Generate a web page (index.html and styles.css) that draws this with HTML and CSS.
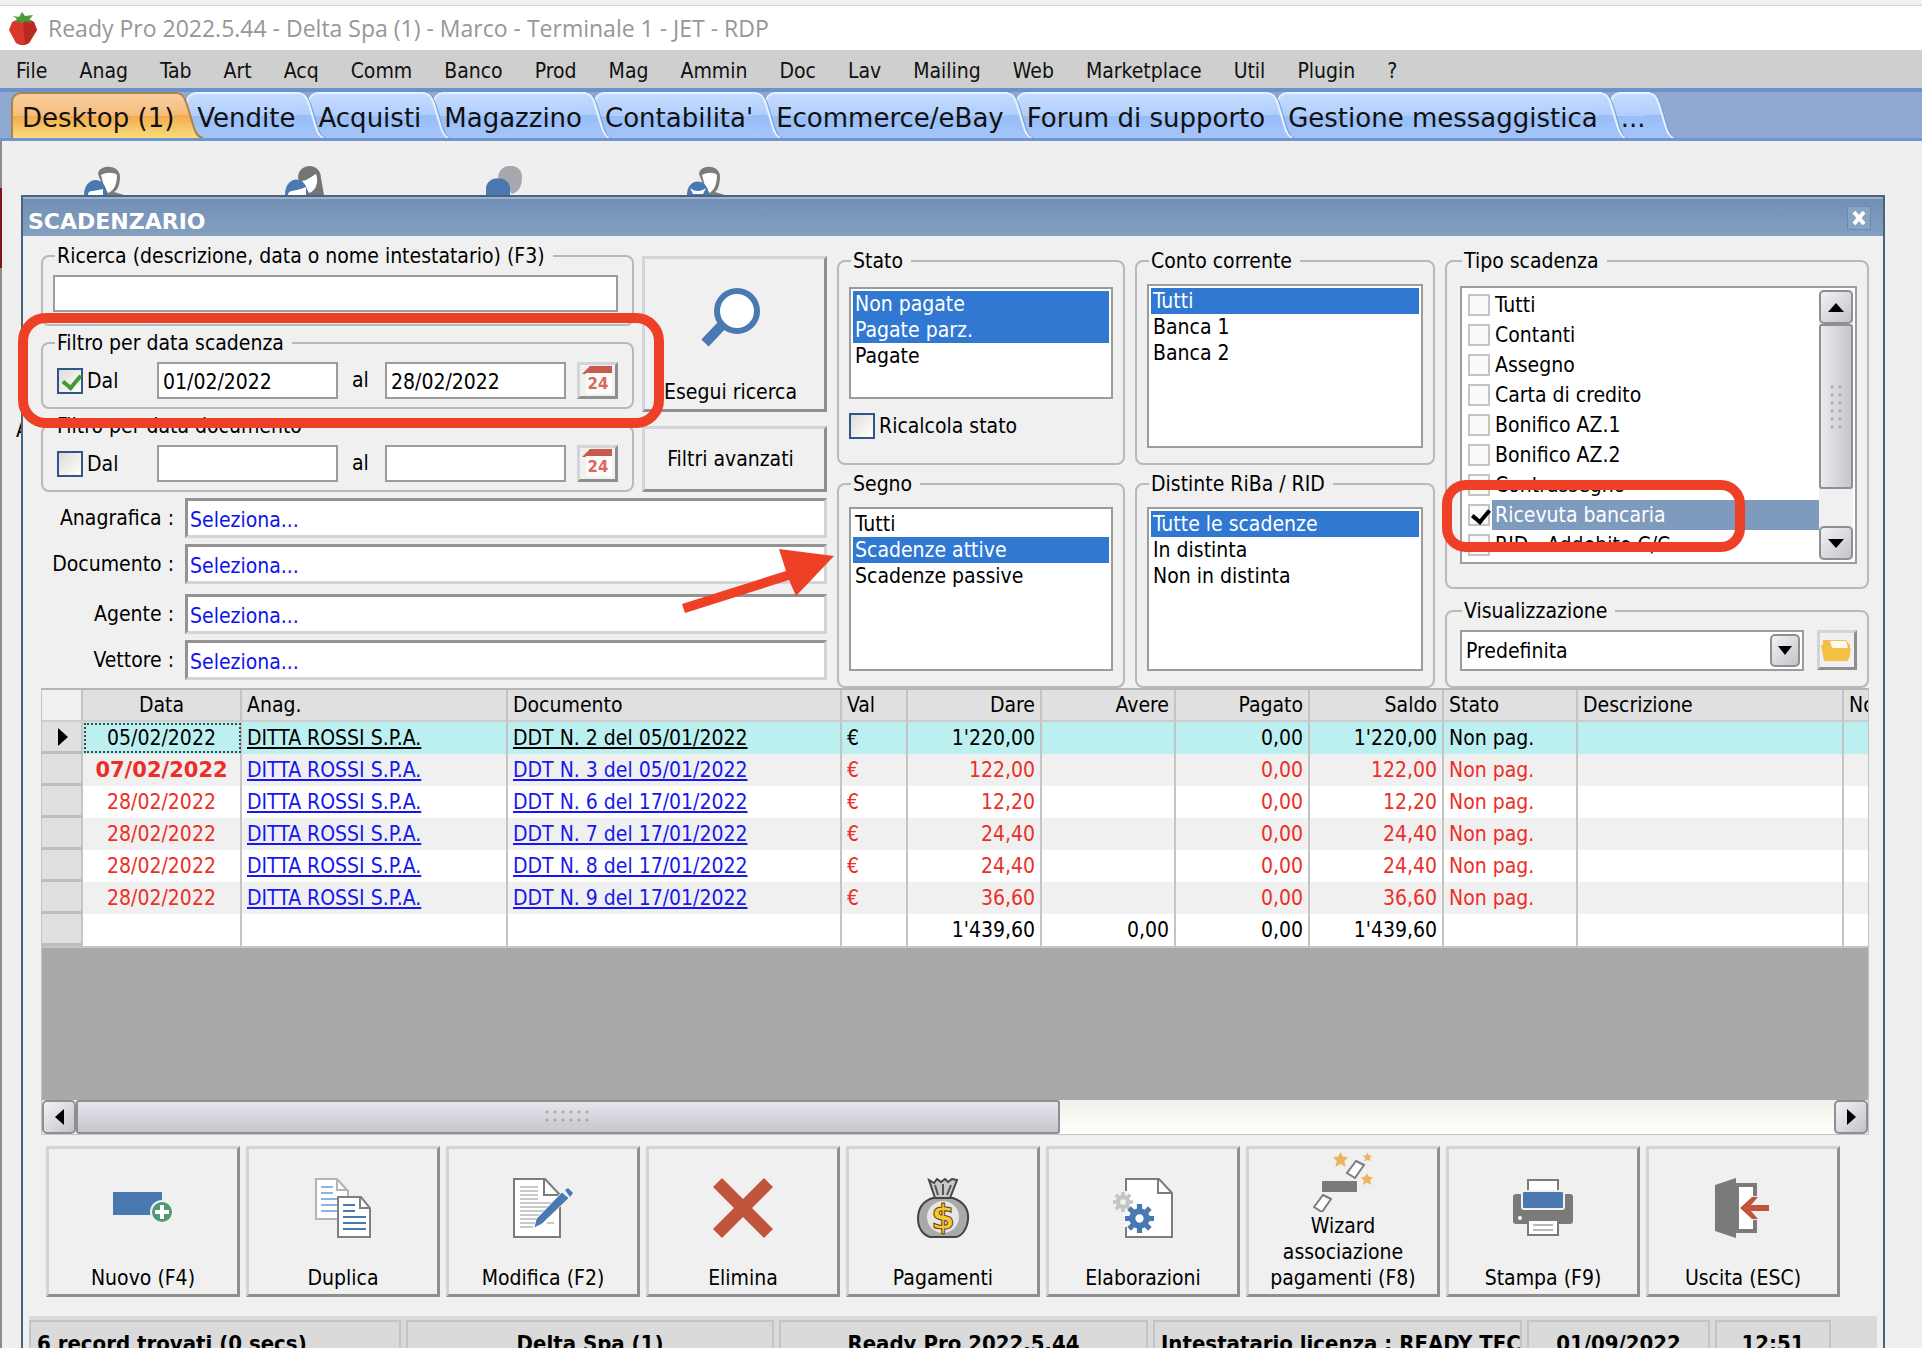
FILE: index.html
```html
<!DOCTYPE html>
<html lang="it">
<head>
  <meta charset="UTF-8">
  <meta name="viewport" content="width=device-width, initial-scale=1.0">
  <title>Ready Pro - Scadenzario</title>
  <link rel="stylesheet" href="styles.css">
</head>
<body>
  <header class="titlebar">
    <svg class="app-icon" width="30" height="34" viewBox="0 0 30 34">
      <path d="M4 11 L11 8 L15 10 L20 8 L26 11 L29 19 L21 32 L17 34 L12 34 L8 32 L1 19 Z" fill="#d8372a"/>
      <path d="M15 10 L20 8 L26 11 L29 19 L21 32 L17 34 Z" fill="#b92a20"/>
      <path d="M5 5 L11 6 L14 1 L17 5 L25 4 L21 9 L24 12 L17 10 L14 13 L11 10 L6 11 L9 8 Z" fill="#4c9a3a"/>
    </svg>
    <span>Ready Pro 2022.5.44 - Delta Spa (1) - Marco - Terminale 1 - JET - RDP</span>
  </header>

  <nav class="menubar">
    <a href="#">File</a>
    <a href="#">Anag</a>
    <a href="#">Tab</a>
    <a href="#">Art</a>
    <a href="#">Acq</a>
    <a href="#">Comm</a>
    <a href="#">Banco</a>
    <a href="#">Prod</a>
    <a href="#">Mag</a>
    <a href="#">Ammin</a>
    <a href="#">Doc</a>
    <a href="#">Lav</a>
    <a href="#">Mailing</a>
    <a href="#">Web</a>
    <a href="#">Marketplace</a>
    <a href="#">Util</a>
    <a href="#">Plugin</a>
    <a href="#">?</a>
  </nav>

  <!-- shared gradients and shapes -->
  <svg class="defs" width="0" height="0">
    <defs>
      <linearGradient id="tab-blue" x1="0" y1="0" x2="0" y2="1">
        <stop offset="0" stop-color="#c6dcff"/>
        <stop offset="0.49" stop-color="#b0cefc"/>
        <stop offset="0.5" stop-color="#98bdf6"/>
        <stop offset="1" stop-color="#a3c5fa"/>
      </linearGradient>
      <linearGradient id="tab-orange" x1="0" y1="0" x2="0" y2="1">
        <stop offset="0" stop-color="#f9cf9f"/>
        <stop offset="0.49" stop-color="#f5bd7c"/>
        <stop offset="0.5" stop-color="#f3a94e"/>
        <stop offset="1" stop-color="#fadd7c"/>
      </linearGradient>
      <symbol id="slant" viewBox="0 0 30 46">
        <path d="M0 0 H2 C10 0 12 6 15 16 L21 36 C23 42 25 46 30 46 H0 Z" fill="url(#tab-blue)"/>
        <path d="M0 1 H2 C9 1 11 6 14 16 L20 36 C22 42 24 45 28 46" fill="none" stroke="#e6f0ff" stroke-width="2"/>
        <path d="M4 0 C11 1 13 7 16 16 L22 36 C24 42 26 45 30 46" fill="none" stroke="#7b9dd0" stroke-width="1"/>
      </symbol>
      <symbol id="slant-active" viewBox="0 0 30 46">
        <path d="M0 0 H2 C10 0 12 6 15 16 L21 36 C23 42 25 46 30 46 H0 Z" fill="url(#tab-orange)"/>
        <path d="M0 1 H2 C9 1 11 6 14 16 L20 36 C22 42 24 45 29 46" fill="none" stroke="#a8844f" stroke-width="2"/>
      </symbol>
      <symbol id="calendar" viewBox="0 0 34 32">
        <path d="M2 9 L10 1 H32 V8 Z" fill="#c85a4c"/>
        <path d="M6 8 H32 V29 H6 Z" fill="#fbfbfb"/>
        <text x="18" y="24" text-anchor="middle" class="cal-day">24</text>
      </symbol>
      <symbol id="gear" viewBox="-14 -14 28 28">
        <circle r="7" fill="none" stroke="currentColor" stroke-width="6"/>
        <path d="M0 -14V-8M0 14V8M-14 0H-8M14 0H8M-10 -10L-6 -6M10 10L6 6M-10 10L-6 6M10 -10L6 -6" stroke="currentColor" stroke-width="5"/>
      </symbol>
      <symbol id="star" viewBox="0 0 20 20">
        <path d="M10 0 L13 6 L20 7 L15 12 L17 20 L10 16 L3 20 L5 12 L0 7 L7 6 Z" fill="#edb45e"/>
      </symbol>
    </defs>
  </svg>

  <nav class="tabs">
    <a href="#" class="tab active"><span>Desktop (1)</span><svg width="30" height="46"><use href="#slant-active"/></svg></a>
    <a href="#" class="tab"><span>Vendite</span><svg width="30" height="46"><use href="#slant"/></svg></a>
    <a href="#" class="tab"><span>Acquisti</span><svg width="30" height="46"><use href="#slant"/></svg></a>
    <a href="#" class="tab"><span>Magazzino</span><svg width="30" height="46"><use href="#slant"/></svg></a>
    <a href="#" class="tab"><span>Contabilita'</span><svg width="30" height="46"><use href="#slant"/></svg></a>
    <a href="#" class="tab"><span>Ecommerce/eBay</span><svg width="30" height="46"><use href="#slant"/></svg></a>
    <a href="#" class="tab"><span>Forum di supporto</span><svg width="30" height="46"><use href="#slant"/></svg></a>
    <a href="#" class="tab"><span>Gestione messaggistica</span><svg width="30" height="46"><use href="#slant"/></svg></a>
    <a href="#" class="tab"><span>...</span><svg width="30" height="46"><use href="#slant"/></svg></a>
  </nav>

  <main class="desktop">
    <div class="desktop-edge"></div>
    <div class="desktop-icons">
      <svg width="40" height="29" viewBox="0 0 40 29">
        <path d="M14 8 C15 -2 35 -2 36 10 C36 18 34 24 30 26 L40 29 H22 Z" fill="#7c7c7c"/>
        <path d="M17 9 C22 6 30 6 33 9 C33 18 30 25 24 27 L20 20 Z" fill="#fff"/>
        <path d="M0 29 C0 10 22 8 23 29 Z" fill="#4a78b0"/>
        <path d="M4 29 C4 23 10 26 19 23 V29 Z" fill="#fff"/>
      </svg>
      <svg width="40" height="29" viewBox="0 0 40 29">
        <path d="M13 12 C13 -4 36 -4 36 12 L39 29 H20 Z" fill="#757575"/>
        <path d="M17 15 C24 14 28 9 31 8 C34 16 31 25 24 27 Z" fill="#fff"/>
        <path d="M0 29 C0 9 22 8 23 29 Z" fill="#4a78b0"/>
        <path d="M3 29 C3 23 10 26 21 21 V29 Z" fill="#fff"/>
      </svg>
      <svg width="40" height="29" viewBox="0 0 40 29">
        <path d="M12 11 C13 -4 36 -4 36 11 C36 20 33 26 26 28 Z" fill="#a5a8ac"/>
        <path d="M0 29 V22 C1 9 23 9 24 22 V29 Z" fill="#4a78b0"/>
      </svg>
      <svg width="40" height="29" viewBox="0 0 40 29">
        <path d="M12 8 C13 -2 32 -2 33 10 C33 18 31 24 28 26 L38 29 H20 Z" fill="#7c7c7c"/>
        <path d="M15 9 C20 6 27 6 30 9 C30 18 27 25 22 27 L18 20 Z" fill="#fff"/>
        <path d="M0 29 C0 11 21 11 22 29 Z" fill="#4a78b0"/>
        <path d="M3 22 C8 26 14 26 19 22 L16 28 H6 Z" fill="#fff"/>
      </svg>
    </div>
    <span class="desktop-label">A</span>

    <section class="dialog">
      <div class="dialog-title">
        <h1>SCADENZARIO</h1>
        <button type="button" class="close" aria-label="Chiudi">
          <svg width="14" height="14" viewBox="0 0 14 14"><path d="M2 1 L12 13 M12 1 L2 13" stroke="#fff" stroke-width="4"/></svg>
        </button>
      </div>

      <form class="dialog-body">
        <div class="filters">
          <div class="search-panel">
            <div class="search-top">
              <div class="search-groups">
                <fieldset class="search-group">
                  <legend><label for="ricerca">Ricerca (descrizione, data o nome intestatario) (F3)</label></legend>
                  <input type="text" id="ricerca" class="field">
                </fieldset>
                <fieldset class="marked">
                  <legend>Filtro per data scadenza</legend>
                  <label class="date-check"><input type="checkbox" class="check" checked>Dal</label>
                  <input type="text" class="field date" value="01/02/2022" aria-label="Scadenza dal">
                  <label for="scad-al" class="date-to">al</label>
                  <input type="text" class="field date" id="scad-al" value="28/02/2022">
                  <button type="button" class="btn cal" aria-label="Calendario scadenza"><svg width="34" height="32"><use href="#calendar"/></svg></button>
                  <div class="mark mark-date"></div>
                </fieldset>
                <fieldset>
                  <legend>Filtro per data documento</legend>
                  <label class="date-check"><input type="checkbox" class="check">Dal</label>
                  <input type="text" class="field date" aria-label="Documento dal">
                  <label for="doc-al" class="date-to">al</label>
                  <input type="text" class="field date" id="doc-al">
                  <button type="button" class="btn cal" aria-label="Calendario documento"><svg width="34" height="32"><use href="#calendar"/></svg></button>
                </fieldset>
              </div>
              <div class="search-buttons">
                <button type="button" class="btn run-search">
                  <svg width="60" height="60" viewBox="0 0 60 60">
                    <path d="M4 56 L23 36" stroke="#4a78b0" stroke-width="10"/>
                    <circle cx="36" cy="24" r="20" fill="#fff" stroke="#4a78b0" stroke-width="6"/>
                  </svg>
                  <span>Esegui ricerca</span>
                </button>
                <button type="button" class="btn advanced">Filtri avanzati</button>
              </div>
            </div>
            <div class="lookups">
              <label for="anagrafica">Anagrafica :</label>
              <input type="text" id="anagrafica" class="lookup" value="Seleziona...">
              <label for="documento">Documento :</label>
              <input type="text" id="documento" class="lookup" value="Seleziona...">
            </div>
            <div class="lookups">
              <label for="agente">Agente :</label>
              <input type="text" id="agente" class="lookup" value="Seleziona...">
              <label for="vettore">Vettore :</label>
              <input type="text" id="vettore" class="lookup" value="Seleziona...">
            </div>
            <svg class="arrow" width="154" height="70" viewBox="0 0 154 70">
              <path d="M0 56 L104 23 L97 1 L152 8 L114 48 L107 32 L3 65 Z" fill="#ed4026"/>
            </svg>
          </div>

          <div class="filter-column">
            <fieldset class="list-group state-group">
              <legend><label for="stato">Stato</label></legend>
              <select id="stato" class="listbox" multiple size="4">
                <option selected>Non pagate</option>
                <option selected>Pagate parz.</option>
                <option>Pagate</option>
              </select>
              <label class="recalc"><input type="checkbox" class="check">Ricalcola stato</label>
            </fieldset>
            <fieldset class="list-group">
              <legend><label for="segno">Segno</label></legend>
              <select id="segno" class="listbox" size="6">
                <option>Tutti</option>
                <option selected>Scadenze attive</option>
                <option>Scadenze passive</option>
              </select>
            </fieldset>
          </div>

          <div class="filter-column">
            <fieldset class="list-group">
              <legend><label for="conto">Conto corrente</label></legend>
              <select id="conto" class="listbox" size="6">
                <option selected>Tutti</option>
                <option>Banca 1</option>
                <option>Banca 2</option>
              </select>
            </fieldset>
            <fieldset class="list-group">
              <legend><label for="distinte">Distinte RiBa / RID</label></legend>
              <select id="distinte" class="listbox" size="6">
                <option selected>Tutte le scadenze</option>
                <option>In distinta</option>
                <option>Non in distinta</option>
              </select>
            </fieldset>
          </div>

          <div class="filter-column">
            <fieldset class="type-group">
              <legend>Tipo scadenza</legend>
              <div class="checklist">
                <div class="checklist-items">
                  <label><input type="checkbox"><span>Tutti</span></label>
                  <label><input type="checkbox"><span>Contanti</span></label>
                  <label><input type="checkbox"><span>Assegno</span></label>
                  <label><input type="checkbox"><span>Carta di credito</span></label>
                  <label><input type="checkbox"><span>Bonifico AZ.1</span></label>
                  <label><input type="checkbox"><span>Bonifico AZ.2</span></label>
                  <label><input type="checkbox"><span>Contrassegno</span></label>
                  <label class="selected"><input type="checkbox" checked><span>Ricevuta bancaria</span></label>
                  <label><input type="checkbox"><span>RID - Addebito C/C</span></label>
                </div>
                <div class="vscroll">
                  <button type="button" class="scroll-btn" aria-label="Su"><svg width="16" height="9" viewBox="0 0 16 9"><path d="M8 0 L16 9 H0 Z"/></svg></button>
                  <div class="thumb"><div class="grip"></div></div>
                  <button type="button" class="scroll-btn" aria-label="Giù"><svg width="16" height="9" viewBox="0 0 16 9"><path d="M8 9 L16 0 H0 Z"/></svg></button>
                </div>
              </div>
              <div class="mark mark-type"></div>
            </fieldset>
            <fieldset class="view-group">
              <legend><label for="vista">Visualizzazione</label></legend>
              <div class="combo">
                <select id="vista">
                  <option>Predefinita</option>
                </select>
                <span class="combo-arrow"><svg width="14" height="9" viewBox="0 0 14 9"><path d="M7 9 L14 0 H0 Z"/></svg></span>
              </div>
              <button type="button" class="btn folder" aria-label="Apri">
                <svg width="32" height="26" viewBox="0 0 32 26">
                  <path d="M3 3 H26 L30 8 V20 H3 Z" fill="#f0bd55"/>
                  <path d="M10 4 H26 L28 11 H12 Z" fill="#fffaf0"/>
                  <path d="M1 8 H10 L14 12 H31 L28 24 H4 Z" fill="#f5c143"/>
                </svg>
              </button>
            </fieldset>
          </div>
        </div>

        <div class="grid">
          <div class="grid-view">
            <table>
              <colgroup>
                <col class="c-sel"><col class="c-date"><col class="c-anag"><col class="c-doc"><col class="c-val">
                <col class="c-num"><col class="c-num"><col class="c-num"><col class="c-num"><col class="c-num">
                <col class="c-desc"><col class="c-note">
              </colgroup>
              <thead>
                <tr>
                  <th></th>
                  <th class="center">Data</th>
                  <th>Anag.</th>
                  <th>Documento</th>
                  <th>Val</th>
                  <th class="num">Dare</th>
                  <th class="num">Avere</th>
                  <th class="num">Pagato</th>
                  <th class="num">Saldo</th>
                  <th>Stato</th>
                  <th>Descrizione</th>
                  <th>Note</th>
                </tr>
              </thead>
              <tbody>
                <tr class="current">
                  <td><svg width="10" height="18" viewBox="0 0 10 18"><path d="M0 0 L10 9 L0 18 Z"/></svg></td>
                  <td class="center focus">05/02/2022</td>
                  <td><a href="#">DITTA ROSSI S.P.A.</a></td>
                  <td><a href="#">DDT N. 2 del 05/01/2022</a></td>
                  <td>€</td>
                  <td class="num">1'220,00</td>
                  <td></td>
                  <td class="num">0,00</td>
                  <td class="num">1'220,00</td>
                  <td>Non pag.</td>
                  <td></td>
                  <td></td>
                </tr>
                <tr>
                  <td></td>
                  <td class="center late">07/02/2022</td>
                  <td><a href="#">DITTA ROSSI S.P.A.</a></td>
                  <td><a href="#">DDT N. 3 del 05/01/2022</a></td>
                  <td>€</td>
                  <td class="num">122,00</td>
                  <td></td>
                  <td class="num">0,00</td>
                  <td class="num">122,00</td>
                  <td>Non pag.</td>
                  <td></td>
                  <td></td>
                </tr>
                <tr>
                  <td></td>
                  <td class="center">28/02/2022</td>
                  <td><a href="#">DITTA ROSSI S.P.A.</a></td>
                  <td><a href="#">DDT N. 6 del 17/01/2022</a></td>
                  <td>€</td>
                  <td class="num">12,20</td>
                  <td></td>
                  <td class="num">0,00</td>
                  <td class="num">12,20</td>
                  <td>Non pag.</td>
                  <td></td>
                  <td></td>
                </tr>
                <tr>
                  <td></td>
                  <td class="center">28/02/2022</td>
                  <td><a href="#">DITTA ROSSI S.P.A.</a></td>
                  <td><a href="#">DDT N. 7 del 17/01/2022</a></td>
                  <td>€</td>
                  <td class="num">24,40</td>
                  <td></td>
                  <td class="num">0,00</td>
                  <td class="num">24,40</td>
                  <td>Non pag.</td>
                  <td></td>
                  <td></td>
                </tr>
                <tr>
                  <td></td>
                  <td class="center">28/02/2022</td>
                  <td><a href="#">DITTA ROSSI S.P.A.</a></td>
                  <td><a href="#">DDT N. 8 del 17/01/2022</a></td>
                  <td>€</td>
                  <td class="num">24,40</td>
                  <td></td>
                  <td class="num">0,00</td>
                  <td class="num">24,40</td>
                  <td>Non pag.</td>
                  <td></td>
                  <td></td>
                </tr>
                <tr>
                  <td></td>
                  <td class="center">28/02/2022</td>
                  <td><a href="#">DITTA ROSSI S.P.A.</a></td>
                  <td><a href="#">DDT N. 9 del 17/01/2022</a></td>
                  <td>€</td>
                  <td class="num">36,60</td>
                  <td></td>
                  <td class="num">0,00</td>
                  <td class="num">36,60</td>
                  <td>Non pag.</td>
                  <td></td>
                  <td></td>
                </tr>
                <tr class="total">
                  <td></td>
                  <td></td>
                  <td></td>
                  <td></td>
                  <td></td>
                  <td class="num">1'439,60</td>
                  <td class="num">0,00</td>
                  <td class="num">0,00</td>
                  <td class="num">1'439,60</td>
                  <td></td>
                  <td></td>
                  <td></td>
                </tr>
              </tbody>
            </table>
          </div>
          <div class="hscroll">
            <button type="button" class="scroll-btn" aria-label="Sinistra"><svg width="9" height="16" viewBox="0 0 9 16"><path d="M9 0 V16 L0 8 Z"/></svg></button>
            <div class="track"><div class="thumb"><div class="grip"></div></div></div>
            <button type="button" class="scroll-btn" aria-label="Destra"><svg width="9" height="16" viewBox="0 0 9 16"><path d="M0 0 V16 L9 8 Z"/></svg></button>
          </div>
        </div>

        <div class="actions">
          <button type="button" class="btn">
            <svg width="60" height="60" viewBox="0 0 60 60">
              <rect x="0" y="14" width="49" height="23" fill="#4a78b0"/>
              <circle cx="49" cy="34" r="12" fill="#f0f0f0"/>
              <circle cx="49" cy="34" r="10" fill="#4f9a70"/>
              <path d="M49 27 V41 M42 34 H56" stroke="#fff" stroke-width="4"/>
            </svg>
            <span>Nuovo (F4)</span>
          </button>
          <button type="button" class="btn">
            <svg width="60" height="60" viewBox="0 0 60 60">
              <path d="M3 1 H24 L35 13 V41 H3 Z" fill="#fff" stroke="#b4b4b4" stroke-width="2"/>
              <path d="M24 1 V12 H35" fill="none" stroke="#b4b4b4" stroke-width="2"/>
              <path d="M8 9 H20 M8 15 H20 M8 21 H24 M8 27 H24 M8 33 H24" stroke="#8db3e0" stroke-width="2"/>
              <path d="M25 19 H48 L57 30 V59 H25 Z" fill="#fff" stroke="#808080" stroke-width="2"/>
              <path d="M47 19 V30 H57" fill="none" stroke="#808080" stroke-width="2"/>
              <path d="M30 27 H42 M30 33 H42 M30 39 H53 M30 45 H53 M30 51 H53" stroke="#4a78b0" stroke-width="2"/>
            </svg>
            <span>Duplica</span>
          </button>
          <button type="button" class="btn">
            <svg width="60" height="60" viewBox="0 0 60 60">
              <path d="M1 1 H32 L47 17 V59 H1 Z" fill="#fff" stroke="#7c7c7c" stroke-width="2"/>
              <path d="M31 1 V17 H47" fill="none" stroke="#7c7c7c" stroke-width="2"/>
              <path d="M7 9 H25 M7 13 H25 M7 17 H25 M7 21 H25 M7 25 H41 M7 29 H38 M7 33 H34 M7 37 H30 M7 41 H27 M7 45 H24 M7 49 H20 M34 45 H41" stroke="#b8b8b8" stroke-width="1.5"/>
              <path d="M21 50 L23 41 L49 14 L56 20 L29 46 Z" fill="#4a78b0" stroke="#f4f4f4"/>
              <path d="M52 12 L55 10 L60 15 L57 19 Z" fill="#4a78b0"/>
            </svg>
            <span>Modifica (F2)</span>
          </button>
          <button type="button" class="btn">
            <svg width="60" height="60" viewBox="0 0 60 60">
              <path d="M9 0 L30 21 L51 0 L60 9 L39 30 L60 51 L51 60 L30 39 L9 60 L0 51 L21 30 L0 9 Z" fill="#c1543a"/>
            </svg>
            <span>Elimina</span>
          </button>
          <button type="button" class="btn">
            <svg width="60" height="60" viewBox="0 0 60 60">
              <path d="M22 20 L16 2 L21 5 L24 1 L28 4 L32 1 L35 4 L39 1 L44 2 L37 20 Z" fill="#c9c9c9" stroke="#444" stroke-width="2"/>
              <path d="M25 17 L22 7 M30 17 V6 M34 17 L38 7" stroke="#555" stroke-width="2"/>
              <path d="M20 20 H40 C51 24 56 32 55 42 C54 51 49 58 43 59 H17 C10 57 5 50 5 41 C5 31 10 23 20 20 Z" fill="#a9a9a9" stroke="#444" stroke-width="2"/>
              <circle cx="30" cy="39" r="16" fill="#e6e6e6"/>
              <text x="30" y="51" text-anchor="middle" class="bag-sign">$</text>
            </svg>
            <span>Pagamenti</span>
          </button>
          <button type="button" class="btn">
            <svg width="60" height="60" viewBox="0 0 60 60">
              <path d="M13 1 H46 L59 15 V59 H13 Z" fill="#fff" stroke="#7c7c7c" stroke-width="2"/>
              <path d="M45 1 V15 H59" fill="none" stroke="#7c7c7c" stroke-width="2"/>
              <rect x="10" y="13" width="6" height="36" fill="#f4f4f4"/>
              <use href="#gear" x="0" y="14" width="20" height="20" color="#c4c4c4"/>
              <use href="#gear" x="12" y="26" width="29" height="29" color="#4a78b0"/>
            </svg>
            <span>Elaborazioni</span>
          </button>
          <button type="button" class="btn">
            <svg width="60" height="60" viewBox="0 0 60 60">
              <use href="#star" x="20" y="0" width="15" height="15"/>
              <use href="#star" x="50" y="0" width="9" height="10"/>
              <use href="#star" x="48" y="21" width="12" height="12"/>
              <path d="M43 9 L51 13 L42 26 L34 21 Z" fill="#fff" stroke="#7c7c7c" stroke-width="2"/>
              <rect x="9" y="29" width="35" height="11" rx="1" fill="#7a7a7a"/>
              <path d="M10 43 L18 47 L9 60 L1 55 Z" fill="#fff" stroke="#7c7c7c" stroke-width="2"/>
            </svg>
            <span>Wizard associazione pagamenti (F8)</span>
          </button>
          <button type="button" class="btn">
            <svg width="60" height="60" viewBox="0 0 60 60">
              <rect x="0" y="16" width="60" height="30" rx="3" fill="#7a7a7a"/>
              <rect x="15" y="2" width="30" height="18" fill="#fff" stroke="#7a7a7a" stroke-width="2"/>
              <rect x="9" y="13" width="42" height="18" rx="2" fill="#4a78b0" stroke="#f0f0f0" stroke-width="2"/>
              <circle cx="7" cy="40" r="2" fill="#fff"/>
              <rect x="15" y="42" width="30" height="15" fill="#fff" stroke="#7a7a7a" stroke-width="2"/>
              <path d="M20 47 H40 M20 52 H40" stroke="#b8b8b8" stroke-width="2"/>
            </svg>
            <span>Stampa (F9)</span>
          </button>
          <button type="button" class="btn">
            <svg width="60" height="60" viewBox="0 0 60 60">
              <path d="M24 7 H42 V53 H24 Z" fill="#fff" stroke="#7a7a7a" stroke-width="4"/>
              <rect x="39" y="18" width="8" height="24" fill="#f0f0f0"/>
              <path d="M2 7 L23 0 V60 L2 53 Z" fill="#7a7a7a"/>
              <path d="M27 30 L39 19 H45 L38 27 H56 V33 H38 L45 41 H39 Z" fill="#c1543a"/>
            </svg>
            <span>Uscita (ESC)</span>
          </button>
        </div>
      </form>

      <footer class="statusbar">
        <div class="status-left">6 record trovati (0 secs)</div>
        <div>Delta Spa (1)</div>
        <div>Ready Pro 2022.5.44</div>
        <div class="status-left">Intestatario licenza : READY TEC</div>
        <div>01/09/2022</div>
        <div>12:51</div>
      </footer>
    </section>
  </main>
</body>
</html>
```
FILE: styles.css
```css
* {
  box-sizing: border-box;
}

body {
  margin: 0;
  height: 100vh;
  display: flex;
  flex-direction: column;
  overflow: hidden;
  border-top: 5px solid #f0f0f0;
  background: #efefef;
  color: #000;
  font-family: 'DejaVu Sans Condensed', 'DejaVu Sans', sans-serif;
  font-size: 21px;
  line-height: 26px;
}

button,
input,
select {
  font: inherit;
  color: inherit;
}

.defs {
  position: absolute;
}

.titlebar {
  display: flex;
  align-items: center;
  gap: 10px;
  height: 45px;
  padding-left: 8px;
  flex-shrink: 0;
  background: #fff;
  border-top: 1px solid #d4d4d4;
  color: #979797;
  font-family: 'Open Sans', 'Noto Sans', sans-serif;
  font-size: 23px;
}

.menubar {
  display: flex;
  align-items: center;
  gap: 32px;
  height: 38px;
  padding: 4px 0 0 16px;
  flex-shrink: 0;
  background: #cfcfcf;
}

.menubar a {
  color: #111;
  text-decoration: none;
}

.tabs {
  display: flex;
  align-items: flex-end;
  height: 53px;
  padding-left: 11px;
  flex-shrink: 0;
  background: #8fa9d3;
  border-top: 4px solid #6d91cb;
  border-bottom: 3px solid #7195cd;
  font-family: 'DejaVu Sans', sans-serif;
  font-size: 26px;
}

.tab {
  display: flex;
  height: 46px;
  margin-right: -18px;
  color: #111;
  text-decoration: none;
}

.tab span {
  padding: 11px 0 0 9px;
  border-top: 2px solid #e6f0ff;
  border-left: 2px solid #e6f0ff;
  border-top-left-radius: 10px;
  background: linear-gradient(#c6dcff, #b0cefc 49%, #98bdf6 50%, #a3c5fa);
}

.tab svg {
  position: relative;
  z-index: 1;
}

.tab.active span {
  border-color: #a8844f;
  background: linear-gradient(#f9cf9f, #f5bd7c 49%, #f3a94e 50%, #fadd7c);
}

/* desktop behind the dialog */
.desktop {
  position: relative;
  flex: 1;
  border-left: 2px solid #8c8c8c;
}

.desktop-edge {
  position: absolute;
  left: -2px;
  top: 47px;
  width: 2px;
  height: 80px;
  background: #7c1712;
}

.desktop-icons {
  display: flex;
  gap: 161px;
  height: 54px;
  padding: 25px 0 0 82px;
}

.desktop-label {
  position: absolute;
  left: 14px;
  top: 276px;
}

.dialog {
  position: relative;
  margin: 0 37px 0 19px;
  border: 2px solid #4a637f;
  border-bottom: 0;
  background: #f0f0f0;
}

.dialog-title {
  display: flex;
  align-items: center;
  justify-content: space-between;
  height: 39px;
  padding: 8px 12px 0 5px;
  border-top: 2px solid #9db2cc;
  background: linear-gradient(#7290b6, #84a0c0);
}

.dialog-title h1 {
  margin: 0;
  color: #fff;
  font-family: 'DejaVu Sans', sans-serif;
  font-size: 22px;
}

.close {
  display: flex;
  padding: 4px;
  margin-bottom: 8px;
  border: 1px solid #6d89ad;
  background: #89a3c2;
}

.dialog-body {
  padding: 7px 14px 0 18px;
}

.filters {
  display: grid;
  grid-template-columns: 786fr 288fr 300fr 424fr;
  gap: 10px;
}

fieldset {
  position: relative;
  display: flex;
  min-width: 0;
  margin: 0;
  padding: 6px 14px 8px 10px;
  border: 2px solid #b9b9b9;
  border-radius: 8px;
}

legend {
  margin-left: 2px;
  padding: 0 8px 0 2px;
}

.field {
  width: 100%;
  height: 37px;
  padding: 2px 4px 0;
  border: 2px solid #9c9c9c;
  background: #fff;
}

.btn {
  padding: 0;
  border: 3px solid;
  border-color: #d3d3da #8f8f8f #8f8f8f #d3d3da;
  background: #f0f0f0;
}

.check {
  appearance: none;
  width: 26px;
  height: 26px;
  margin: 0 4px 0 0;
  border: 2px solid #2f5687;
  background: linear-gradient(135deg, #dcdcd7, #fff);
}

.check:checked {
  position: relative;
}

.check:checked::after {
  content: '';
  position: absolute;
  left: 7px;
  top: 1px;
  width: 8px;
  height: 14px;
  border: solid #3f9a2f;
  border-width: 0 4px 4px 0;
  transform: rotate(40deg);
}

/* search panel */
.search-panel {
  position: relative;
  display: flex;
  flex-direction: column;
  gap: 10px;
}

.search-top {
  display: grid;
  grid-template-columns: 593fr 185fr;
  gap: 8px;
  margin-bottom: -4px;
}

.search-groups {
  display: flex;
  flex-direction: column;
  gap: 4px;
}

.search-group {
  padding-bottom: 12px;
}

.marked {
  z-index: 1;
}

.date-check {
  display: flex;
  align-items: center;
  width: 104px;
  padding-left: 4px;
  flex-shrink: 0;
}

.date {
  flex: 1;
  min-width: 0;
}

.date-to {
  width: 47px;
  padding: 5px 0 0 14px;
}

.cal {
  width: 41px;
  height: 37px;
  margin-left: 11px;
}

.cal svg {
  display: block;
}

.cal-day {
  fill: #d8695c;
  font: bold 15px 'DejaVu Sans', sans-serif;
}

.search-buttons {
  display: flex;
  flex-direction: column;
  gap: 14px;
  padding-top: 13px;
}

.run-search {
  display: flex;
  flex-direction: column;
  align-items: center;
  height: 156px;
  padding: 28px 8px 4px 0;
  justify-content: space-between;
}

.advanced {
  height: 66px;
  padding-right: 8px;
}

.lookups {
  display: grid;
  grid-template-columns: 133px 1fr;
  align-items: center;
  gap: 6px 11px;
  text-align: right;
}

.lookup {
  width: 100%;
  height: 40px;
  padding: 3px 2px 0;
  border: 3px solid;
  border-color: #939393 #d3d3da #d3d3da #939393;
  background: #fff;
  color: #1212ee;
}

/* red annotations */
.mark {
  position: absolute;
  border: 10px solid #ed4026;
  border-radius: 28px;
  pointer-events: none;
}

.mark-date {
  inset: -43px -32px -21px -25px;
}

.mark-type {
  left: -5px;
  right: 122px;
  top: 206px;
  height: 72px;
  border-radius: 24px;
}

.arrow {
  position: absolute;
  right: -9px;
  bottom: 70px;
}

/* list filters */
.filter-column {
  display: flex;
  flex-direction: column;
  gap: 6px;
  padding-top: 5px;
}

.list-group {
  flex-direction: column;
  gap: 14px;
  height: 217px;
  padding: 10px 10px 17px;
}

.state-group {
  padding: 13px 10px 22px;
}

.listbox {
  appearance: none;
  flex: 1;
  width: 100%;
  min-height: 0;
  padding: 2px;
  border: 2px solid #9c9c9c;
  border-radius: 0;
  outline: 0;
  overflow: hidden;
  background: #fff;
}

.listbox option {
  height: 26px;
  padding: 1px 2px 0;
}

.listbox option:checked {
  background-image: linear-gradient(#3078d1, #3078d1);
  -webkit-text-fill-color: #fff;
}

.recalc {
  display: flex;
  align-items: center;
}

.type-group {
  height: 341px;
  padding: 12px 10px 23px 13px;
}

.checklist {
  display: flex;
  flex: 1;
  padding: 2px;
  border: 2px solid #9c9c9c;
  background: #fff;
}

.checklist-items {
  flex: 1;
  overflow: hidden;
}

.checklist-items label {
  display: flex;
  align-items: center;
  height: 30px;
  padding-left: 4px;
}

.checklist-items input {
  appearance: none;
  position: relative;
  width: 22px;
  height: 22px;
  margin: 0 2px 0 0;
  border: 2px solid #c4c4c4;
  background: #fafafa;
}

.checklist-items input:checked::after {
  content: '';
  position: absolute;
  left: 5px;
  top: 0;
  width: 8px;
  height: 13px;
  border: solid #000;
  border-width: 0 4px 4px 0;
  transform: rotate(40deg);
}

.checklist-items span {
  flex: 1;
  height: 30px;
  padding: 2px 3px;
}

.checklist-items .selected span {
  background: #7e9abd;
  color: #fff;
}

.vscroll {
  display: flex;
  flex-direction: column;
  width: 34px;
  background: #f0f0f0;
}

.scroll-btn {
  display: flex;
  align-items: center;
  justify-content: center;
  width: 34px;
  height: 34px;
  padding: 0;
  flex-shrink: 0;
  border: 2px solid #8f8f93;
  border-radius: 5px;
  background: linear-gradient(135deg, #f2f2f6, #c3c3c9);
}

.thumb {
  display: flex;
  align-items: center;
  justify-content: center;
  border: 2px solid #8f8f93;
  border-radius: 3px;
}

.vscroll .thumb {
  height: 165px;
  margin-bottom: auto;
  background: linear-gradient(90deg, #e9e9ee, #c6c6cc);
}

.grip {
  width: 14px;
  height: 46px;
  background: radial-gradient(circle at 3px 3px, #a8a8ae 1px, transparent 2px) 0 0 / 8px 8px;
}

.view-group {
  align-items: flex-start;
  gap: 13px;
  height: 90px;
  margin-top: 3px;
  padding: 6px 10px 0 13px;
}

.combo {
  position: relative;
  flex: 1;
}

.combo select {
  appearance: none;
  display: block;
  width: 100%;
  height: 41px;
  padding: 0 4px;
  border: 2px solid #9c9c9c;
  border-radius: 0;
  background: #fff;
}

.combo-arrow {
  position: absolute;
  right: 4px;
  top: 4px;
  display: flex;
  align-items: center;
  justify-content: center;
  width: 30px;
  height: 33px;
  border: 2px solid #8f8f93;
  border-radius: 5px;
  background: linear-gradient(135deg, #f2f2f6, #c3c3c9);
  pointer-events: none;
}

.folder {
  width: 40px;
  height: 40px;
}

.folder svg {
  display: block;
}

/* results grid */
.grid {
  border: 1px solid #c4c4cc;
  border-top: 2px solid #b5b5b5;
}

.grid-view {
  min-height: 410px;
  overflow: hidden;
  background: #a9a9a9;
}

table {
  width: 1920px;
  table-layout: fixed;
  border-collapse: separate;
  border-spacing: 0;
  border-bottom: 2px solid #c4c4c4;
  background: #fff;
}

.c-sel { width: 41px; }
.c-date { width: 159px; }
.c-anag { width: 266px; }
.c-doc { width: 334px; }
.c-val { width: 66px; }
.c-num { width: 134px; }
.c-desc { width: 266px; }

th,
td {
  height: 32px;
  padding: 0 5px;
  border-right: 2px solid #c4c4c4;
  text-align: left;
  white-space: nowrap;
}

th {
  font-weight: normal;
  background: #e0e0e0;
  border-bottom: 2px solid #cdcdcd;
}

th:first-child {
  background: #f0f0f0;
}

td:first-child {
  padding-left: 16px;
  background: #e0e0e0;
  border-bottom: 3px solid #bdbdbd;
}

td:first-child svg {
  display: block;
}

.center {
  text-align: center;
}

.num {
  text-align: right;
}

tbody tr {
  color: #ec2f26;
}

tbody tr:nth-child(even) {
  background: #f0f0f0;
}

tbody a {
  color: #1717f0;
}

.current {
  background: #bcefef;
}

.current,
.current a,
.total {
  color: #000;
}

.focus {
  outline: 2px dotted #444;
  outline-offset: -3px;
}

.late {
  font-family: 'DejaVu Sans', sans-serif;
  font-weight: bold;
}

.hscroll {
  display: flex;
  height: 34px;
}

.hscroll .track {
  flex: 1;
  background: linear-gradient(#f1f0ea, #fffffb);
}

.hscroll .thumb {
  width: 56%;
  height: 34px;
  background: linear-gradient(#e6e7ee, #c6c6cc);
}

.hscroll .grip {
  width: 48px;
  height: 16px;
}

.actions {
  display: grid;
  grid-template-columns: repeat(9, 1fr);
  gap: 6px;
  padding: 11px 29px 19px 5px;
}

.actions .btn {
  display: flex;
  flex-direction: column;
  align-items: center;
  height: 151px;
  padding: 1px 16px 3px;
}

.actions svg {
  margin: auto;
  flex-shrink: 0;
}

.bag-sign {
  fill: #f6c832;
  stroke: #6b3c10;
  stroke-width: 1px;
  font: bold 34px 'DejaVu Sans', sans-serif;
}

.statusbar {
  display: grid;
  grid-template-columns: 372fr 368fr 369fr 369fr 183fr 116fr;
  gap: 5px;
  margin: 0 6px;
  padding: 4px 46px 0 0;
  background: #dadada;
  font-size: 22px;
  font-weight: bold;
}

.statusbar div {
  height: 44px;
  padding: 9px 6px;
  border: 2px solid #c3c3cc;
  overflow: hidden;
  white-space: nowrap;
  text-align: center;
}

.statusbar .status-left {
  text-align: left;
}
```
